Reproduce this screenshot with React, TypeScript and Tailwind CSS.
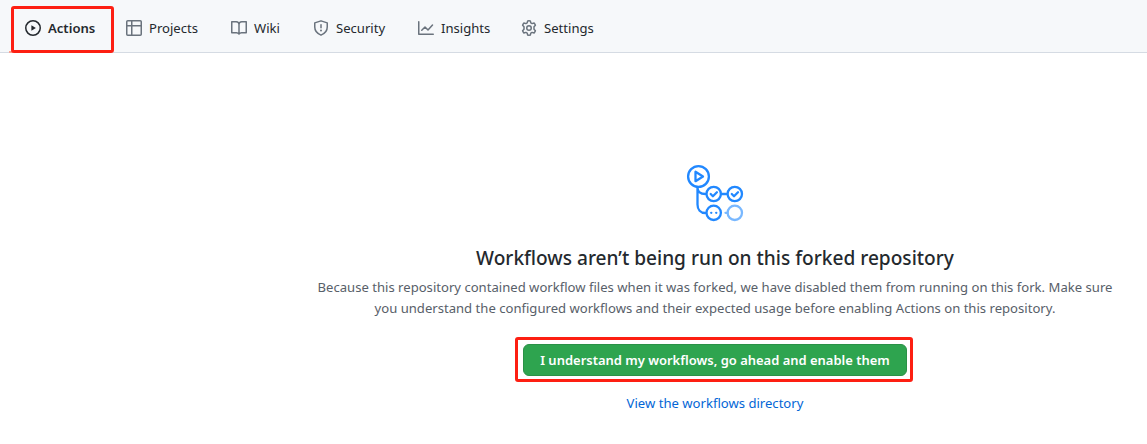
import type { ReactNode } from 'react';

function Icon({ children }: { children: ReactNode }) {
  return (
    <svg
      width="16"
      height="16"
      viewBox="0 0 16 16"
      fill="none"
      stroke="currentColor"
      strokeWidth="1.5"
      strokeLinecap="round"
      strokeLinejoin="round"
      className="shrink-0"
    >
      {children}
    </svg>
  );
}

const tableIcon = (
  <Icon>
    <rect x="0.75" y="0.75" width="14.5" height="14.5" rx="1" />
    <path d="M1 5.75h14M5.75 1v14" />
  </Icon>
);

const bookIcon = (
  <Icon>
    <path d="M.75 1.75h4.5C6.8 1.75 8 3 8 4.5V14c-.6-.8-1.5-1.25-2.5-1.25H.75zM15.25 1.75h-4.5C9.2 1.75 8 3 8 4.5V14c.6-.8 1.5-1.25 2.5-1.25h4.75z" />
  </Icon>
);

const shieldIcon = (
  <Icon>
    <path d="M8 .85 14.25 2.85V7c0 3.7-2.2 6.5-6.25 8.15C3.95 13.5 1.75 10.7 1.75 7V2.85z" />
    <path d="M8 4.75v3" />
    <circle cx="8" cy="10.5" r="1" fill="currentColor" stroke="none" />
  </Icon>
);

const graphIcon = (
  <Icon>
    <path d="M.75 1.75v12.5h14.5M3.75 10.25 7 7l3 3 4.5-5" />
  </Icon>
);

const gearIcon = (
  <Icon>
    <path d="M6.7.9Q8 .7 9.3.9L9.8 2.9 11.1 3.6 13.1 3Q14 4 14.4 5.2L13 6.7V9.3L14.4 10.8Q14 12 13.1 13L11.1 12.4 9.8 13.1 9.3 15.1Q8 15.3 6.7 15.1L6.2 13.1 4.9 12.4 2.9 13Q2 12 1.6 10.8L3 9.3V6.7L1.6 5.2Q2 4 2.9 3L4.9 3.6 6.2 2.9z" />
    <circle cx="8" cy="8" r="2.25" />
  </Icon>
);

function Tab({ icon, label, className }: { icon: ReactNode; label: string; className: string }) {
  return (
    <a className={`flex shrink-0 items-center gap-[7px] text-[#6a737d] ${className}`}>
      {icon}
      <span className="whitespace-nowrap text-[#24292e]">{label}</span>
    </a>
  );
}

function WorkflowGraphic() {
  return (
    <svg width="58" height="58" viewBox="0 0 58 58" fill="none" stroke="#2188ff" strokeWidth="2.3" strokeLinecap="round" strokeLinejoin="round">
      <circle cx="12.5" cy="12.5" r="10.4" />
      <path d="M9.5 7.8v9.4l7.5-4.7z" />
      <path d="M11.5 23.5v17c0 5 3 8.5 8 8.5M11.5 23.5c0 4.5 3 6.5 8 6.5M35 30h6" />
      <circle cx="27.7" cy="30" r="7.2" />
      <circle cx="48.8" cy="30" r="7.2" />
      <path d="m24.7 30 2.2 2.2 4-4M45.8 30l2.2 2.2 4-4" />
      <circle cx="27.7" cy="48.8" r="7.2" />
      <path d="M25.2 48.8h.1M30.2 48.8h.1" />
      <g stroke="#79b8ff">
        <path d="M39.5 48.8h2" />
        <circle cx="48.8" cy="48.8" r="7.2" />
      </g>
    </svg>
  );
}

export default function App() {
  return (
    <div className="flex h-[444px] w-[1147px] flex-col overflow-hidden bg-white font-['Noto_Sans','Open_Sans',sans-serif] text-[13.1px] leading-5">
      <nav className="flex h-[53px] shrink-0 border-b border-[#d5dbe3] bg-[#f6f8fa]">
        <div className="relative flex w-[126px] shrink-0 pl-[11px] pt-[6px]">
          <span className="absolute left-[9px] top-[51px] h-[2px] w-[4px] bg-[#f9a392]" />
          <a className="relative flex h-[47px] w-[103px] items-center gap-[7px] rounded-[3px] border-[3px] border-[#fd1f12] pb-[3px] pl-[11px] text-[#24292e]">
            <Icon>
              <circle cx="8" cy="8" r="7.25" />
              <path d="M6.4 5.3v5.4L10.9 8z" fill="currentColor" stroke="none" />
            </Icon>
            <span className="text-[13.1px] font-semibold">Actions</span>
          </a>
        </div>
        <div className="flex h-[56px] items-center">
          <Tab className="w-[105px]" icon={tableIcon} label="Projects" />
          <Tab className="w-[82px]" icon={bookIcon} label="Wiki" />
          <Tab className="w-[105px]" icon={shieldIcon} label="Security" />
          <Tab className="w-[103px]" icon={graphIcon} label="Insights" />
          <Tab className="w-[103px]" icon={gearIcon} label="Settings" />
        </div>
      </nav>
      <main className="ml-[283px] flex w-[864px] flex-col items-center pt-[111px]">
        <WorkflowGraphic />
        <h1 className="mt-[21px] whitespace-nowrap text-[19.1px] font-medium leading-[30px] text-[#24292e]">
          Workflows aren’t being run on this forked repository
        </h1>
        <p className="mt-[4px] whitespace-nowrap text-center leading-[21px] text-[#586069]">
          Because this repository contained workflow files when it was forked, we have disabled them from running on this fork. Make sure
          <br />
          you understand the configured workflows and their expected usage before enabling Actions on this repository.
        </p>
        <div className="-ml-[2px] mt-[18px] flex h-[45px] w-[398px] items-center rounded-[3px] border-[3px] border-[#fd1f12] pl-[5px]">
          <button className="h-8 w-[384px] whitespace-nowrap rounded-md border border-[#2a9147] bg-[#2ea44f] text-[12.97px] font-semibold text-white">
            I understand my workflows, go ahead and enable them
          </button>
        </div>
        <a className="mt-[11px] text-[#0366d6]">View the workflows directory</a>
      </main>
    </div>
  );
}
